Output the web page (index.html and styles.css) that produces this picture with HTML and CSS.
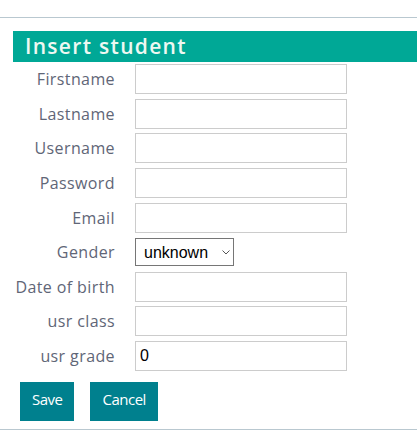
FILE: index.html
```html
<!DOCTYPE html>
<html>
<head>
<meta charset="utf-8">
<link rel="stylesheet" href="styles.css">
</head>
<body>
<div class="page">
  <hr class="rule">
  <section class="panel">
    <h1 class="title">Insert student</h1>
    <form class="form">
      <label class="lbl">Firstname</label><input class="inp" type="text">
      <label class="lbl">Lastname</label><input class="inp" type="text">
      <label class="lbl">Username</label><input class="inp" type="text">
      <label class="lbl">Password</label><input class="inp" type="password">
      <label class="lbl">Email</label><input class="inp" type="text">
      <label class="lbl">Gender</label>
      <div class="selwrap">
        <select class="sel"><option>unknown</option></select>
        <svg class="chev" width="8" height="5" viewBox="0 0 8 5"><path d="M0.5 0.5 L4 4 L7.5 0.5" fill="none" stroke="#555" stroke-width="1"/></svg>
      </div>
      <label class="lbl">Date of birth</label><input class="inp" type="text">
      <label class="lbl">usr class</label><input class="inp" type="text">
      <label class="lbl">usr grade</label><input class="inp" type="text" value="0">
    </form>
    <div class="actions">
      <button class="btn" type="button">Save</button>
      <button class="btn" type="button">Cancel</button>
    </div>
  </section>
  <hr class="rule bottom">
</div>
</body>
</html>
```

FILE: styles.css
```css
html, body {
  margin: 0;
  padding: 0;
  background: #fff;
}
.page {
  padding-top: 17px;
}
.rule {
  margin: 0;
  border: 0;
  border-top: 1px solid #b9c8d0;
  height: 0;
}
.rule.bottom {
  margin-top: 8px;
}
.panel {
  margin: 13px 0 0 13px;
}
.title {
  margin: 0;
  height: 31px;
  background: #00a896;
  color: #eef8f2;
  font-family: "Open Sans", sans-serif;
  font-weight: 600;
  font-size: 21px;
  letter-spacing: 1.3px;
  line-height: 31px;
  padding-left: 12px;
}
.form {
  display: grid;
  grid-template-columns: 102px 212px;
  column-gap: 20px;
  grid-auto-rows: 34.6px;
  align-items: center;
}
.lbl {
  text-align: right;
  font-family: "Open Sans", sans-serif;
  font-size: 16px;
  letter-spacing: 0.4px;
  color: #5f6677;
  white-space: nowrap;
}
.inp {
  box-sizing: border-box;
  width: 212px;
  height: 30px;
  margin: 0;
  border: 1px solid #cccccc;
  padding: 0 4px;
  font-family: "Liberation Sans", Arial, sans-serif;
  font-size: 16px;
  color: #000;
  outline: none;
}
.selwrap {
  position: relative;
  width: 99px;
  height: 28px;
}
.sel {
  box-sizing: border-box;
  -webkit-appearance: none;
  appearance: none;
  width: 99px;
  height: 28px;
  margin: 0;
  border: 1px solid #767676;
  border-radius: 0;
  background: #fff;
  padding: 0 4px 0 8px;
  font-family: "Liberation Sans", Arial, sans-serif;
  font-size: 16px;
  color: #000;
}
.chev {
  position: absolute;
  left: 87px;
  top: 12px;
  pointer-events: none;
}
.actions {
  display: flex;
  gap: 16px;
  margin: 8.6px 0 0 7px;
}
.btn {
  box-sizing: border-box;
  height: 39px;
  margin: 0;
  border: 0;
  background: #00808e;
  color: #fff;
  font-family: "Open Sans", sans-serif;
  font-size: 15px;
  letter-spacing: -0.5px;
  padding: 0 12px 4px;
  cursor: pointer;
}
```
